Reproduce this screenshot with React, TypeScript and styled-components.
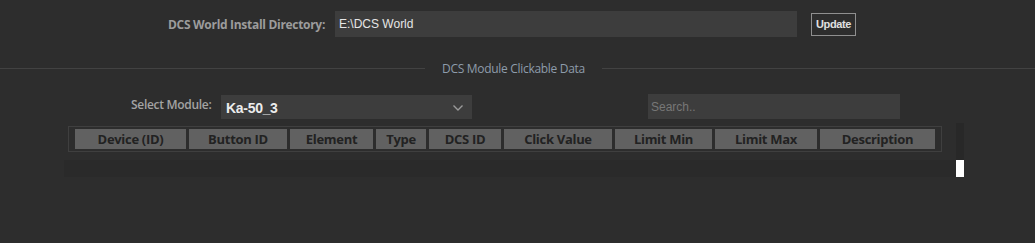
import styled, { createGlobalStyle } from "styled-components";

const GlobalStyle = createGlobalStyle`
  html, body {
    margin: 0;
    padding: 0;
    background: #2d2d2d;
  }
  body {
    font-family: "Open Sans", "Noto Sans", sans-serif;
    width: 1035px;
    height: 243px;
    overflow: hidden;
  }
`;

const columns = [
  { label: "Device (ID)", width: 111 },
  { label: "Button ID", width: 98 },
  { label: "Element", width: 83 },
  { label: "Type", width: 50 },
  { label: "DCS ID", width: 72 },
  { label: "Click Value", width: 108 },
  { label: "Limit Min", width: 97 },
  { label: "Limit Max", width: 102 },
  { label: "Description", width: 115 },
];

export default function App() {
  return (
    <Page>
      <GlobalStyle />
      <InstallRow>
        <Label>DCS World Install Directory:</Label>
        <PathInput defaultValue="E:\DCS World" />
        <UpdateButton>Update</UpdateButton>
      </InstallRow>

      <SectionTitle>DCS Module Clickable Data</SectionTitle>

      <ModuleRow>
        <ModuleLabel>Select Module:</ModuleLabel>
        <SelectBox>
          <span>Ka-50_3</span>
          <svg width="12" height="8" viewBox="0 0 12 8">
            <path d="M1.5 1.5 L6 6 L10.5 1.5" fill="none" stroke="#9a9a9a" strokeWidth="1.4" />
          </svg>
        </SelectBox>
        <SearchInput placeholder="Search.." />
      </ModuleRow>

      <TableWrap>
        <TableMain>
          <HeaderArea>
            <HeaderRow>
              {columns.map((c) => (
                <HeaderCell key={c.label} $w={c.width}>
                  {c.label}
                </HeaderCell>
              ))}
            </HeaderRow>
          </HeaderArea>
          <BodyStrip />
        </TableMain>
        <ScrollTrack>
          <ScrollThumb />
        </ScrollTrack>
      </TableWrap>
    </Page>
  );
}

const Page = styled.div`
  display: flex;
  flex-direction: column;
  padding-top: 11px;
`;

const InstallRow = styled.div`
  display: flex;
  align-items: center;
  padding-left: 168px;
  height: 26px;
`;

const Label = styled.label`
  color: #9c9c9c;
  font-size: 12px;
  font-weight: 700;
  width: 157px;
  white-space: nowrap;
  margin-right: 10px;
  letter-spacing: -0.3px;
`;

const PathInput = styled.input`
  width: 462px;
  height: 26px;
  box-sizing: border-box;
  border: none;
  outline: none;
  background: #3d3d3d;
  color: #e6e6e6;
  font-family: "Liberation Sans", Arial, sans-serif;
  font-size: 12px;
  padding: 0 4px;
  margin-right: 14px;
`;

const UpdateButton = styled.button`
  width: 45px;
  height: 23px;
  box-sizing: border-box;
  background: #2d2d2d;
  border: 1px solid #8f8f8f;
  color: #e0e0e0;
  font-family: "Liberation Sans", Arial, sans-serif;
  font-size: 11px;
  font-weight: 700;
  padding: 0;
  letter-spacing: -0.4px;
`;

const SectionTitle = styled.div`
  display: flex;
  align-items: center;
  gap: 17px;
  margin-top: 23px;
  height: 16px;
  color: #8d9cab;
  font-size: 12px;
  letter-spacing: -0.3px;
  white-space: nowrap;
  &::before,
  &::after {
    content: "";
    height: 1px;
    background: #424242;
    flex: 1;
  }
  &::before {
    flex: 0 0 425px;
  }
`;

const ModuleRow = styled.div`
  display: flex;
  align-items: center;
  padding-left: 131px;
  margin-top: 18px;
  height: 25px;
`;

const ModuleLabel = styled.label`
  color: #a3a3a3;
  font-size: 12px;
  font-weight: 600;
  width: 80px;
  white-space: nowrap;
  margin-right: 10px;
  letter-spacing: -0.3px;
  margin-top: -4px;
`;

const SelectBox = styled.div`
  width: 251px;
  height: 24px;
  box-sizing: border-box;
  background: #3d3d3d;
  display: flex;
  align-items: center;
  justify-content: space-between;
  padding: 2px 8px 0 5px;
  color: #ececec;
  font-family: "Liberation Sans", Arial, sans-serif;
  font-size: 14px;
  font-weight: 700;
  letter-spacing: -0.3px;
  margin-right: 176px;
`;

const SearchInput = styled.input`
  width: 252px;
  height: 25px;
  box-sizing: border-box;
  border: none;
  outline: none;
  background: #3d3d3d;
  color: #e6e6e6;
  font-family: "Liberation Sans", Arial, sans-serif;
  font-size: 12px;
  padding: 0 3px;
  &::placeholder {
    color: #777;
  }
`;

const TableWrap = styled.div`
  display: flex;
  margin: 4px 0 0 64px;
  width: 900px;
  height: 54px;
`;

const TableMain = styled.div`
  flex: 1;
  display: flex;
  flex-direction: column;
`;

const HeaderArea = styled.div`
  padding: 3px 14px 0 4px;
  height: 37px;
  box-sizing: border-box;
`;

const HeaderRow = styled.div`
  display: flex;
  gap: 3px;
  padding: 2px 6px 2px 6px;
  border: 1px solid #3f3f3f;
  height: 26px;
  box-sizing: border-box;
`;

const HeaderCell = styled.div<{ $w: number }>`
  width: ${(p) => p.$w}px;
  flex: none;
  background: #616161;
  color: #222222;
  font-size: 13px;
  font-weight: 700;
  text-align: center;
  line-height: 20px;
  letter-spacing: -0.3px;
  white-space: nowrap;
`;

const BodyStrip = styled.div`
  flex: 1;
  background: #2a2a2a;
`;

const ScrollTrack = styled.div`
  width: 8px;
  display: flex;
  flex-direction: column;
  justify-content: flex-end;
  background: #282828;
`;

const ScrollThumb = styled.div`
  height: 17px;
  background: #ffffff;
`;
